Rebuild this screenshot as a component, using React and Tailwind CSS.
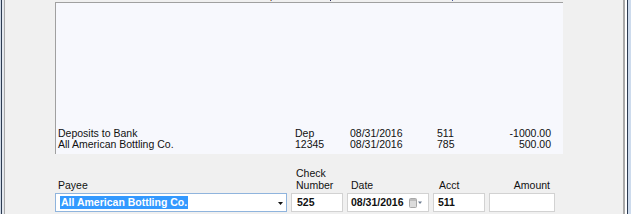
import React from "react";

const rows = [
  { name: "Deposits to Bank", num: "Dep", date: "08/31/2016", acct: "511", amt: "-1000.00" },
  { name: "All American Bottling Co.", num: "12345", date: "08/31/2016", acct: "785", amt: "500.00" },
];

export default function App() {
  return (
    <div className="w-[631px] h-[214px] flex overflow-hidden bg-[#f0f0f0] text-[10.5px] text-[#111] font-['Liberation_Sans',Arial,sans-serif]">
      {/* left window frame */}
      <div className="w-px bg-[#cfd8e4]" />
      <div className="w-px bg-[#2c3b52]" />
      <div className="w-[2px] bg-[#e4e8ee]" />
      <div className="w-px bg-[#a9a9a9]" />

      {/* main area */}
      <div className="w-[618px] flex flex-col">
        {/* cut-off header fragments */}
        <div className="h-[2px] flex items-start">
          <div className="ml-[265px] w-px h-px bg-[#e8a050]" />
          <div className="w-px h-px bg-[#6a8ad0]" />
          <div className="ml-[58px] w-px h-px bg-[#2c3060]" />
          <div className="ml-[121px] w-px h-px bg-[#4a5aa0]" />
        </div>

        {/* list panel */}
        <div className="ml-[50px] w-[508px] h-[152px] border-t border-l border-[#a0a0a0] bg-[#f7f8fd] flex flex-col justify-end pb-[4px] pl-[2px]">
          {rows.map((r) => (
            <div key={r.name} className="flex leading-[11px] h-[11px] whitespace-nowrap">
              <div className="w-[237px]">{r.name}</div>
              <div className="w-[55px]">{r.num}</div>
              <div className="w-[87px]">{r.date}</div>
              <div className="w-[30px]">{r.acct}</div>
              <div className="w-[84px] text-right">{r.amt}</div>
            </div>
          ))}
        </div>

        {/* entry form */}
        <div className="ml-[50px] pt-[13px] flex items-end gap-[4px] leading-[12px]">
          {/* Payee */}
          <div className="w-[232px] flex flex-col">
            <div className="pl-[3px] h-[12px]">Payee</div>
            <div className="mt-[2px] h-[19px] border border-[#8fb4dd] bg-white flex items-center pl-[4px] pr-[3px]">
              <span className="bg-[#3399ff] text-white font-bold leading-[13px] h-[13px] pl-[1px] pr-[1px] whitespace-nowrap">
                All American Bottling Co.
              </span>
              <div className="flex-1" />
              <svg width="5" height="3" viewBox="0 0 5 3" className="mt-[1px]">
                <path d="M0 0H5L2.5 3Z" fill="#111" />
              </svg>
            </div>
          </div>

          {/* Check Number */}
          <div className="w-[52px] flex flex-col">
            <div className="pl-[5px]">Check</div>
            <div className="pl-[5px]">Number</div>
            <div className="mt-[2px] h-[19px] border border-[#d2d2d2] bg-white flex items-center pl-[5px] font-bold leading-[13px]">
              525
            </div>
          </div>

          {/* Date */}
          <div className="w-[82px] flex flex-col">
            <div className="pl-[4px]">Date</div>
            <div className="mt-[2px] h-[19px] border border-[#d2d2d2] bg-white flex items-center pl-[3px] pr-[6px] font-bold leading-[13px] whitespace-nowrap">
              <span>08/31/2016</span>
              <div className="flex-1" />
              <svg width="13" height="10" viewBox="0 0 13 10">
                <rect x="0.5" y="0.5" width="7" height="9" rx="1" fill="#dcdcdc" stroke="#a8a8a8" />
                <rect x="1" y="1" width="6" height="2" fill="#bdbdbd" />
                <path d="M9 3.5H13L11 6Z" fill="#6d7b8f" />
              </svg>
            </div>
          </div>

          {/* Acct */}
          <div className="w-[52px] flex flex-col">
            <div className="pl-[6px]">Acct</div>
            <div className="mt-[2px] h-[19px] border border-[#d2d2d2] bg-white flex items-center pl-[4px] font-bold leading-[13px]">
              511
            </div>
          </div>

          {/* Amount */}
          <div className="w-[66px] flex flex-col">
            <div className="pr-[5px] text-right">Amount</div>
            <div className="mt-[2px] h-[19px] border border-[#d2d2d2] bg-white" />
          </div>
        </div>
      </div>

      {/* right window frame */}
      <div className="w-[2px] bg-[#a9a9a9]" />
      <div className="w-[2px] bg-white" />
      <div className="w-px bg-[#2c3b52]" />
      <div className="w-[3px] bg-[#cddbed]" />
    </div>
  );
}
